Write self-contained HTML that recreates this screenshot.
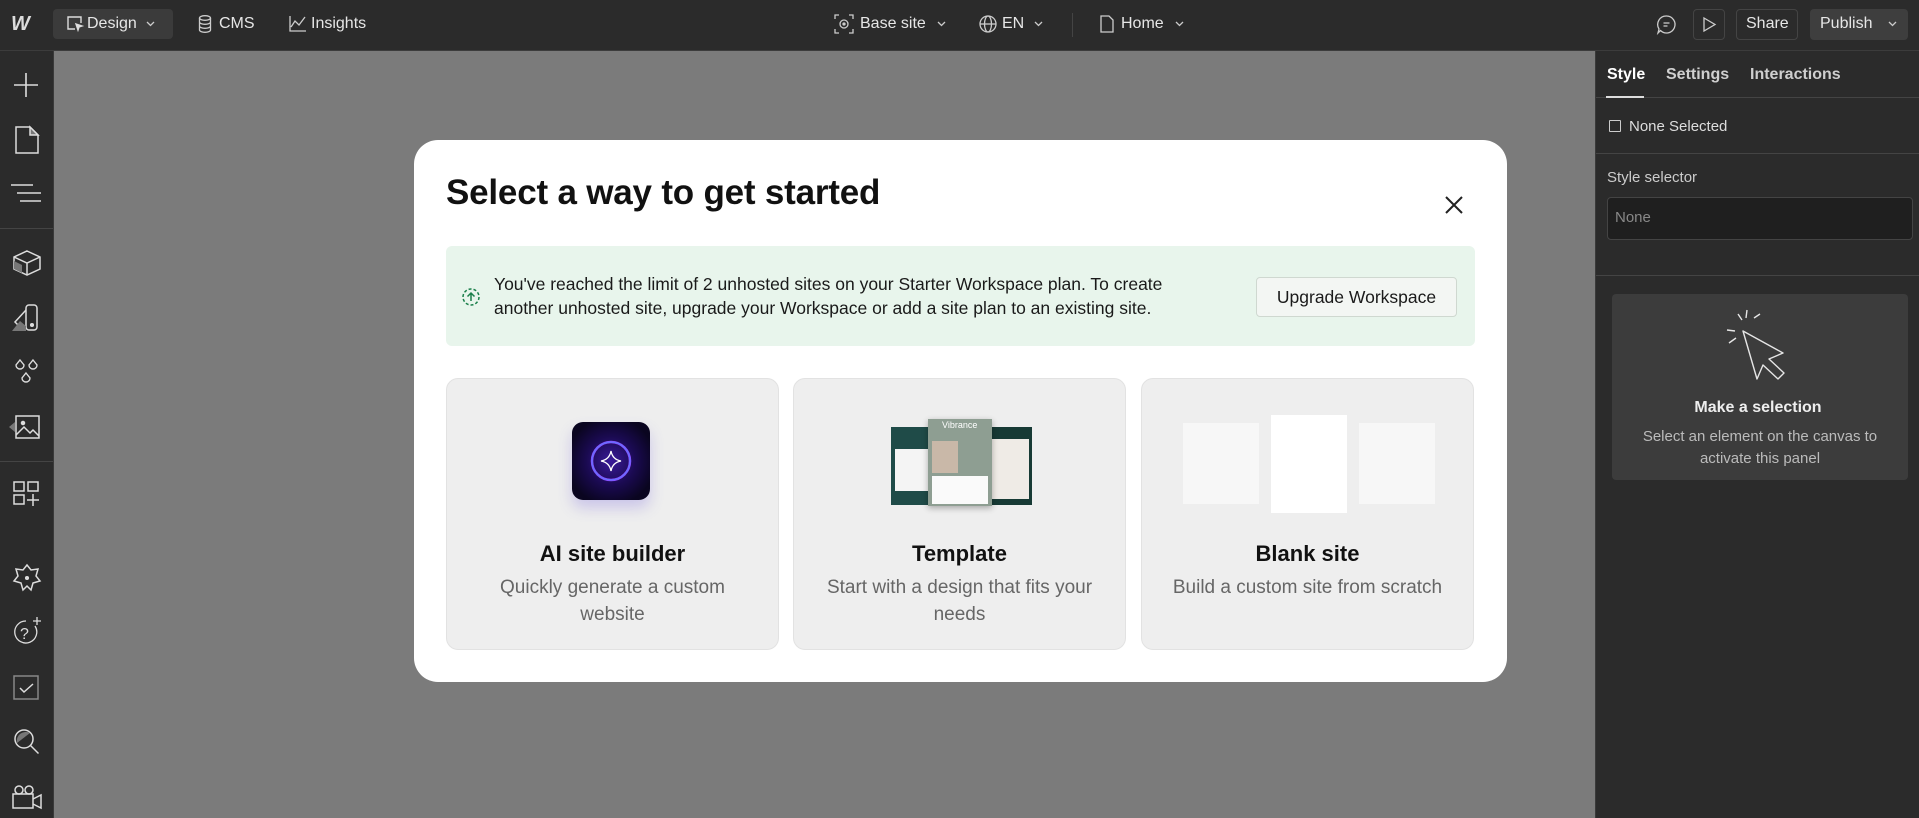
<!DOCTYPE html>
<html style="width:1919px;height:818px;overflow:hidden"><head><meta charset="utf-8"><style>
*{box-sizing:border-box;margin:0;padding:0}
body{width:1919px;height:818px;overflow:hidden;background:#7b7b7b;font-family:"Liberation Sans",sans-serif;position:relative}
.abs{position:absolute}
#top{left:0;top:0;width:1919px;height:51px;background:#2b2b2b;border-bottom:1px solid #3c3c3c;color:#e6e6e6;font-size:16px}
#side{left:0;top:51px;width:54px;height:767px;background:#2b2b2b;border-right:1px solid #3a3a3a;overflow:hidden}
#right{left:1595px;top:51px;width:324px;height:767px;background:#2b2b2b;border-left:1px solid #3a3a3a;color:#d8d8d8}
.t{position:absolute;white-space:nowrap}
svg{position:absolute;overflow:visible}
#modal{left:414px;top:140px;width:1093px;height:542px;background:#fff;border-radius:24px}
.card{position:absolute;top:238px;width:333px;height:272px;background:#eeeeee;border:1px solid #e2e2e2;border-radius:12px;text-align:center}
.card h3{position:absolute;top:162px;left:0;right:0;font-size:22px;font-weight:bold;color:#111}
.card p{position:absolute;top:195px;left:20px;right:20px;font-size:19px;line-height:27px;color:#666}
</style></head><body>
<div id="top" class="abs">
  <div class="t" style="left:11px;top:13px;font-weight:900;font-style:italic;font-size:20px;color:#ddd;letter-spacing:-3px">W</div>
  <div class="abs" style="left:53px;top:9px;width:120px;height:30px;background:#3b3b3b;border-radius:4px"></div>
  <svg style="left:66px;top:15px" width="18" height="18" viewBox="0 0 18 18" fill="none" stroke="#ddd" stroke-width="1.4"><path d="M9 14H2V2h13v6"/><path d="M10 9l6 2-3 1-1 3z" fill="#ddd"/></svg>
  <div class="t" style="left:87px;top:15px">Design</div>
  <svg style="left:146px;top:21px" width="9" height="6"><path d="M1 1l3.5 3.5L8 1" stroke="#ccc" fill="none" stroke-width="1.3"/></svg>
  <svg style="left:198px;top:15px" width="14" height="18" fill="none" stroke="#ccc" stroke-width="1.3"><ellipse cx="7" cy="3" rx="5.5" ry="2.3"/><path d="M1.5 3v12c0 1.3 2.5 2.3 5.5 2.3s5.5-1 5.5-2.3V3M1.5 7c0 1.3 2.5 2.3 5.5 2.3s5.5-1 5.5-2.3M1.5 11c0 1.3 2.5 2.3 5.5 2.3s5.5-1 5.5-2.3"/></svg>
  <div class="t" style="left:219px;top:15px">CMS</div>
  <svg style="left:289px;top:16px" width="17" height="16" fill="none" stroke="#ccc" stroke-width="1.3"><path d="M1 0v15h16M2 11l4-6 4 4 6-8"/></svg>
  <div class="t" style="left:311px;top:15px">Insights</div>
  <svg style="left:834px;top:14px" width="20" height="20" fill="none" stroke="#ccc" stroke-width="1.3"><path d="M1 5V1h4M15 1h4v4M19 15v4h-4M5 19H1v-4"/><circle cx="10" cy="10" r="4"/><circle cx="10" cy="10" r="1" fill="#ccc"/></svg>
  <div class="t" style="left:860px;top:15px">Base site</div>
  <svg style="left:937px;top:21px" width="9" height="6"><path d="M1 1l3.5 3.5L8 1" stroke="#ccc" fill="none" stroke-width="1.3"/></svg>
  <svg style="left:979px;top:15px" width="18" height="18" fill="none" stroke="#ccc" stroke-width="1.3"><circle cx="9" cy="9" r="8"/><ellipse cx="9" cy="9" rx="3.5" ry="8"/><path d="M1 9h16"/></svg>
  <div class="t" style="left:1002px;top:15px">EN</div>
  <svg style="left:1034px;top:21px" width="9" height="6"><path d="M1 1l3.5 3.5L8 1" stroke="#ccc" fill="none" stroke-width="1.3"/></svg>
  <div class="abs" style="left:1072px;top:13px;width:1px;height:24px;background:#444"></div>
  <svg style="left:1100px;top:15px" width="14" height="18" fill="none" stroke="#ccc" stroke-width="1.3"><path d="M1 1h8l4 4v12H1z"/></svg>
  <div class="t" style="left:1121px;top:15px">Home</div>
  <svg style="left:1175px;top:21px" width="9" height="6"><path d="M1 1l3.5 3.5L8 1" stroke="#ccc" fill="none" stroke-width="1.3"/></svg>
  <svg style="left:1657px;top:15px" width="19" height="19" fill="none" stroke="#ccc" stroke-width="1.3"><path d="M9.5 1a8.5 8.5 0 1 1-6 14.5L1 18l1-4A8.5 8.5 0 0 1 9.5 1z"/><path d="M6.5 8h6M6.5 11h4"/></svg>
  <div class="abs" style="left:1693px;top:9px;width:32px;height:31px;border:1px solid #444;border-radius:4px"></div>
  <svg style="left:1703px;top:17px" width="13" height="15" fill="none" stroke="#ccc" stroke-width="1.3"><path d="M1 1l11 6.5L1 14z"/></svg>
  <div class="abs" style="left:1736px;top:9px;width:62px;height:31px;border:1px solid #444;border-radius:4px"></div>
  <div class="t" style="left:1746px;top:15px">Share</div>
  <div class="abs" style="left:1810px;top:9px;width:98px;height:31px;background:#3e3e3e;border-radius:4px"></div>
  <div class="t" style="left:1820px;top:15px">Publish</div>
  <svg style="left:1888px;top:21px" width="9" height="6"><path d="M1 1l3.5 3.5L8 1" stroke="#ccc" fill="none" stroke-width="1.3"/></svg>
</div>

<div id="side" class="abs">
  <svg style="left:12px;top:20px" width="28" height="28" stroke="#ddd" stroke-width="1.6" fill="none"><path d="M14 2v24M2 14h24"/></svg>
  <svg style="left:15px;top:75px" width="24" height="28" stroke="#ddd" stroke-width="1.5" fill="none"><path d="M1 1h14l8 8v18H1z"/><path d="M15 1v8h8z" fill="#777"/></svg>
  <svg style="left:11px;top:132px" width="30" height="20" stroke="#ddd" stroke-width="1.5"><path d="M0 2h22M6 10h24M9 18h21"/></svg>
  <div class="abs" style="left:0;top:177px;width:53px;height:1px;background:#444"></div>
  <svg style="left:13px;top:199px" width="28" height="26" stroke="#ddd" stroke-width="1.5" fill="none"><path d="M14 1L27 7v12l-13 6L1 19V7z"/><path d="M1 7l13 6 13-6M14 13v12"/><path d="M1 11l8 4v8l-8-4z" fill="#777" stroke="none"/></svg>
  <svg style="left:12px;top:253px" width="28" height="28" stroke="#ddd" stroke-width="1.5" fill="none"><rect x="14" y="1" width="11" height="25" rx="3"/><path d="M14 6L3 18l6 6" /><path d="M0 27l8-10 6 5v5z" fill="#777" stroke="none"/><circle cx="20" cy="21" r="1.3" fill="#ddd"/></svg>
  <svg style="left:12px;top:307px" width="30" height="30" stroke="#ddd" stroke-width="1.4" fill="none"><path d="M8 2l4 5a4 4 0 1 1-8 0z"/><path d="M21 2l4 5a4 4 0 1 1-8 0z"/><path d="M14 15l4 5a4 4 0 1 1-8 0z"/></svg>
  <svg style="left:9px;top:362px" width="32" height="28" stroke="#ddd" stroke-width="1.5" fill="none"><rect x="7" y="3" width="23" height="22"/><path d="M7 22l8-8 6 6 3-3 6 6"/><circle cx="14" cy="10" r="1.5" fill="#ddd"/><path d="M0 14l6-5v10z" fill="#777" stroke="none"/></svg>
  <div class="abs" style="left:0;top:410px;width:53px;height:1px;background:#444"></div>
  <svg style="left:13px;top:430px" width="26" height="26" stroke="#ddd" stroke-width="1.5" fill="none"><rect x="1" y="1" width="10" height="9"/><rect x="15" y="1" width="10" height="9"/><rect x="1" y="14" width="10" height="9"/><path d="M20 13v12M14 19h12"/></svg>
  <svg style="left:13px;top:513px" width="28" height="28" stroke="#ddd" stroke-width="1.5" fill="none"><path d="M14 1l4 5 7-1-2 7 4 5-7 2-2 7-4-4-4 4-2-7-7-2 4-5-2-7 7 1z"/><circle cx="14" cy="14" r="1.3" fill="#ddd"/></svg>
  <svg style="left:11px;top:565px" width="32" height="30" stroke="#ddd" stroke-width="1.3" fill="none"><path d="M24 10a11 11 0 1 1-9-5"/><text x="9" y="23" font-size="16" fill="#ddd" stroke="none" font-family="Liberation Sans">?</text><path d="M26 1v8M22 5h8"/></svg>
  <svg style="left:13px;top:624px" width="28" height="26" stroke="#ddd" stroke-width="1.5" fill="none"><rect x="1" y="1" width="24" height="23" stroke="#888"/><path d="M7 13l4 4 9-8"/></svg>
  <svg style="left:13px;top:677px" width="28" height="28" stroke="#ddd" stroke-width="1.5" fill="none"><circle cx="11" cy="11" r="9"/><path d="M4 15a9 9 0 0 1 13-10z" fill="#777" stroke="none"/><path d="M17.5 17.5l8 8"/></svg>
  <svg style="left:11px;top:733px" width="32" height="26" stroke="#ddd" stroke-width="1.5" fill="none"><circle cx="8" cy="6" r="4"/><circle cx="18" cy="6" r="4"/><rect x="2" y="10" width="20" height="14"/><path d="M22 15l8-4v13l-8-4"/></svg>
</div>

<div id="right" class="abs">
  <div class="t" style="left:11px;top:15px;font-weight:bold;color:#fff;font-size:16px">Style</div>
  <div class="t" style="left:70px;top:15px;font-weight:bold;color:#cfcfcf;font-size:16px">Settings</div>
  <div class="t" style="left:154px;top:15px;font-weight:bold;color:#cfcfcf;font-size:16px">Interactions</div>
  <div class="abs" style="left:0;top:46px;width:324px;height:1px;background:#444"></div>
  <div class="abs" style="left:10px;top:45px;width:38px;height:2px;background:#ddd"></div>
  <div class="abs" style="left:13px;top:69px;width:12px;height:12px;border:1.4px solid #ccc;border-radius:1px"></div>
  <div class="t" style="left:33px;top:67px;font-size:15px;color:#ddd">None Selected</div>
  <div class="abs" style="left:0;top:102px;width:324px;height:1px;background:#444"></div>
  <div class="t" style="left:11px;top:118px;font-size:15px;color:#ccc">Style selector</div>
  <div class="abs" style="left:11px;top:146px;width:306px;height:43px;background:#1f1f1f;border:1px solid #444;border-radius:4px"></div>
  <div class="t" style="left:19px;top:158px;font-size:15px;color:#888">None</div>
  <div class="abs" style="left:0;top:224px;width:324px;height:1px;background:#444"></div>
  <div class="abs" style="left:16px;top:243px;width:296px;height:186px;background:#3c3c3c;border-radius:4px"></div>
  <svg style="left:125px;top:258px" width="80" height="80" stroke="#e6e6e6" stroke-width="1.4" fill="none"><path d="M22 22l14 48 6-14 15 14 6-6-15-14 14-6z" stroke-linejoin="round"/><path d="M26 1l-1 8M17 5l4 6M33 9l6-4M6 21l8 1M8 34l7-5"/></svg>
  <div class="t" style="left:0;width:324px;text-align:center;top:348px;font-size:16px;font-weight:bold;color:#eee">Make a selection</div>
  <div class="t" style="left:26px;width:276px;text-align:center;top:375px;font-size:15px;line-height:22px;color:#bbb;white-space:normal">Select an element on the canvas to activate this panel</div>
</div>

<div id="modal" class="abs">
  <div class="t" style="left:32px;top:33px;font-size:35px;font-weight:bold;color:#111;letter-spacing:-0.2px">Select a way to get started</div>
  <svg style="left:1031px;top:56px" width="18" height="18" stroke="#222" stroke-width="2"><path d="M1 1l16 16M17 1L1 17"/></svg>
  <div class="abs" style="left:32px;top:106px;width:1029px;height:100px;background:#e8f5ec;border-radius:6px"></div>
  <svg style="left:48px;top:148px" width="18" height="18" stroke="#1a7f4a" stroke-width="1.5" fill="none"><circle cx="9" cy="9" r="8" stroke-dasharray="3 2"/><path d="M9 13V5M5.5 8.5L9 5l3.5 3.5"/></svg>
  <div class="t" style="left:80px;top:132px;font-size:17.5px;line-height:24px;color:#1a1a1a">You've reached the limit of 2 unhosted sites on your Starter Workspace plan. To create<br>another unhosted site, upgrade your Workspace or add a site plan to an existing site.</div>
  <div class="abs" style="left:842px;top:137px;width:201px;height:40px;background:#f3f6f3;border:1px solid #cfd8d0;border-radius:4px;font-size:17.5px;color:#1a1a1a;text-align:center;line-height:38px">Upgrade Workspace</div>

  <div class="card" style="left:32px">
    <div class="abs" style="left:125px;top:43px;width:78px;height:78px;border-radius:11px;background:radial-gradient(circle at 50% 50%,#3a1a9a 0,#1a0a50 45%,#0a0520 80%);box-shadow:0 8px 14px rgba(100,80,220,.25)"></div>
    <svg style="left:125px;top:43px" width="78" height="78"><circle cx="39" cy="39" r="19" fill="none" stroke="#8a4dff" stroke-width="2.5"/><circle cx="39" cy="39" r="19" fill="none" stroke="#4a8dff" stroke-width="1" opacity=".7"/><path d="M39 29q1.5 8.5 10 10q-8.5 1.5-10 10q-1.5-8.5-10-10q8.5-1.5 10-10z" fill="none" stroke="#fff" stroke-width="1.3"/></svg>
    <h3>AI site builder</h3>
    <p>Quickly generate a custom website</p>
  </div>
  <div class="card" style="left:379px">
    <div class="abs" style="left:97px;top:48px;width:48px;height:78px;background:#1f4b48"></div>
    <div class="abs" style="left:101px;top:70px;width:40px;height:42px;background:#f4f4f4"></div>
    <div class="abs" style="left:190px;top:48px;width:48px;height:78px;background:#173a35"></div>
    <div class="abs" style="left:193px;top:60px;width:42px;height:60px;background:#efebe6"></div>
    <div class="abs" style="left:134px;top:40px;width:64px;height:87px;background:#8e9e92;box-shadow:0 2px 6px rgba(0,0,0,.3)"></div>
    <div class="abs" style="left:138px;top:62px;width:26px;height:32px;background:#c9b8a8"></div>
    <div class="abs" style="left:138px;top:97px;width:56px;height:28px;background:#fafafa"></div>
    <div class="t" style="left:148px;top:41px;font-size:9px;color:#fff">Vibrance</div>
    <h3>Template</h3>
    <p>Start with a design that fits your needs</p>
  </div>
  <div class="card" style="left:727px">
    <div class="abs" style="left:41px;top:44px;width:76px;height:81px;background:#f7f7f7"></div>
    <div class="abs" style="left:129px;top:36px;width:76px;height:98px;background:#fff"></div>
    <div class="abs" style="left:217px;top:44px;width:76px;height:81px;background:#f7f7f7"></div>
    <h3>Blank site</h3>
    <p>Build a custom site from scratch</p>
  </div>
</div>
</body></html>
